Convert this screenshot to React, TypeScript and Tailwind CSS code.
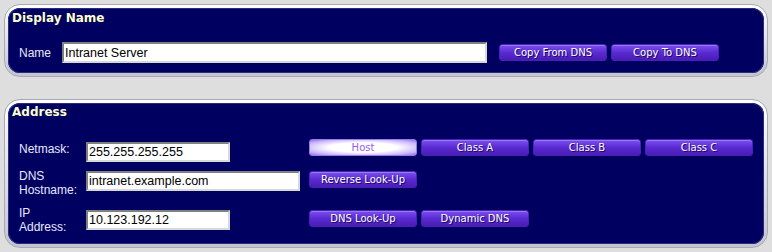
import React from "react";

const btn =
  "h-[17px] w-[108px] rounded-[3px] border border-[#4a20b8] bg-gradient-to-b from-[#7d4ff0] via-[#5a2ad2] to-[#4a1cb4] text-white text-[10px] leading-[15px] text-center [text-shadow:1px_1px_0_#1a0a60] shadow-[inset_0_1px_0_#9a78f4]";
const hostBtn =
  "h-[17px] w-[108px] rounded-[3px] border border-[#9a78ee] bg-[radial-gradient(ellipse_at_center,#ffffff_45%,#c8b4f8_80%,#9470e8_100%)] text-[#9a5cf0] text-[10px] leading-[15px] text-center";
const input =
  "h-[20px] bg-white border-2 border-t-[#808080] border-l-[#808080] border-b-[#d8d8d8] border-r-[#d8d8d8] px-[1px] text-[12.5px] leading-[16px] text-black outline-none";

function Panel({ children, className }: { children: React.ReactNode; className?: string }) {
  return (
    <div className={"rounded-[16px] border border-[#a8a8b8] bg-gradient-to-b from-[#ffffff] to-[#c4c4d0] p-[3px] " + (className ?? "")}>
      <div className="rounded-[12px] bg-[#000060] shadow-[inset_0_0_0_1px_#2a2a80]">{children}</div>
    </div>
  );
}

export default function App() {
  return (
    <div
      className="w-[772px] h-[252px] bg-[#dedede] px-[4px] pt-[4px] overflow-hidden"
      style={{ fontFamily: '"Liberation Sans", Arial, sans-serif' }}
    >
      <Panel>
        <div className="h-[65px] flex flex-col">
          <div
            className="pl-[4px] pt-[3px] text-[12px] leading-[14px] font-bold text-[#ffffcc]"
            style={{ fontFamily: '"DejaVu Sans", Verdana, sans-serif' }}
          >
            Display Name
          </div>
          <div className="mt-[17px] flex items-center pl-[11px]">
            <div className="w-[43px] text-[12px] text-[#e8e8ff]">Name</div>
            <input className={input + " w-[425px] h-[21px]"} defaultValue="Intranet Server" />
            <div className="ml-[12px] flex gap-[4px]" style={{ fontFamily: '"DejaVu Sans", Verdana, sans-serif' }}>
              <div className={btn}>Copy From DNS</div>
              <div className={btn}>Copy To DNS</div>
            </div>
          </div>
        </div>
      </Panel>

      <Panel className="mt-[22px]">
        <div className="h-[141px] flex flex-col">
          <div
            className="pl-[4px] pt-[2px] text-[12px] leading-[14px] font-bold text-[#ffffcc]"
            style={{ fontFamily: '"DejaVu Sans", Verdana, sans-serif' }}
          >
            Address
          </div>

          <div className="mt-[20px] flex items-center pl-[11px] h-[20px]">
            <div className="w-[67px] text-[12px] leading-[14px] text-[#e8e8ff]">Netmask:</div>
            <div className="w-[223px] self-start">
              <input className={input + " w-[144px]"} defaultValue="255.255.255.255" />
            </div>
            <div className="self-start flex gap-[4px]" style={{ fontFamily: '"DejaVu Sans", Verdana, sans-serif' }}>
              <div className={hostBtn}>Host</div>
              <div className={btn}>Class A</div>
              <div className={btn}>Class B</div>
              <div className={btn}>Class C</div>
            </div>
          </div>

          <div className="mt-[10px] flex items-center pl-[11px] h-[28px]">
            <div className="w-[67px] text-[12px] leading-[14px] text-[#e8e8ff]">
              DNS
              <br />
              Hostname:
            </div>
            <div className="w-[223px] flex items-start h-[20px] self-center mt-[-4px]">
              <input className={input + " w-[214px]"} defaultValue="intranet.example.com" />
            </div>
            <div className="flex gap-[4px] self-center mt-[-7px]" style={{ fontFamily: '"DejaVu Sans", Verdana, sans-serif' }}>
              <div className={btn}>Reverse Look-Up</div>
            </div>
          </div>

          <div className="mt-[9px] flex items-center pl-[11px] h-[28px]">
            <div className="w-[67px] text-[12px] leading-[14px] text-[#e8e8ff]">
              IP
              <br />
              Address:
            </div>
            <div className="w-[223px] flex items-start h-[20px] self-center">
              <input className={input + " w-[144px]"} defaultValue="10.123.192.12" />
            </div>
            <div className="flex gap-[4px] self-center mt-[-4px]" style={{ fontFamily: '"DejaVu Sans", Verdana, sans-serif' }}>
              <div className={btn}>DNS Look-Up</div>
              <div className={btn}>Dynamic DNS</div>
            </div>
          </div>
        </div>
      </Panel>
    </div>
  );
}
